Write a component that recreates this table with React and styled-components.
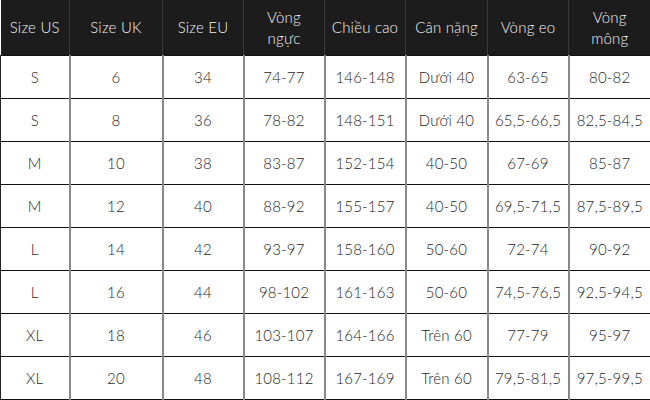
import React from 'react'
import styled, { createGlobalStyle } from 'styled-components'

const GlobalStyle = createGlobalStyle`
  html, body {
    margin: 0;
    padding: 0;
    background: #ffffff;
  }
`

const widths = [69, 93, 81, 81, 81, 82, 81, 82]

const headers = [['Size US'], ['Size UK'], ['Size EU'], ['Vòng', 'ngực'], ['Chiều cao'], ['Cân nặng'], ['Vòng eo'], ['Vòng', 'mông']]

const rows = [
  ['S', '6', '34', '74-77', '146-148', 'Dưới 40', '63-65', '80-82'],
  ['S', '8', '36', '78-82', '148-151', 'Dưới 40', '65,5-66,5', '82,5-84,5'],
  ['M', '10', '38', '83-87', '152-154', '40-50', '67-69', '85-87'],
  ['M', '12', '40', '88-92', '155-157', '40-50', '69,5-71,5', '87,5-89,5'],
  ['L', '14', '42', '93-97', '158-160', '50-60', '72-74', '90-92'],
  ['L', '16', '44', '98-102', '161-163', '50-60', '74,5-76,5', '92,5-94,5'],
  ['XL', '18', '46', '103-107', '164-166', 'Trên 60', '77-79', '95-97'],
  ['XL', '20', '48', '108-112', '167-169', 'Trên 60', '79,5-81,5', '97,5-99,5'],
]

const SizeTable = styled.table`
  width: 650px;
  height: 400px;
  table-layout: fixed;
  border-collapse: collapse;
  font-family: 'Lato', 'DejaVu Sans', sans-serif;
  font-size: 15px;
  font-weight: 300;
  letter-spacing: 0.2px;
  color: #1e1e1e;
`

const HeadCell = styled.th`
  height: 55px;
  padding: 0 2px;
  background: #1c1c1c;
  color: #f2f2f2;
  font-weight: 300;
  line-height: 21px;
  text-align: center;
  white-space: nowrap;
  border-left: 1px solid #3a3a3a;
  &:first-child {
    border-left: none;
  }
`

const Cell = styled.td`
  height: 42px;
  padding: 0;
  text-align: center;
  white-space: nowrap;
  border-top: 1px solid #111;
  border-left: 2px solid #888;
  &:first-child {
    border-left: 1px solid #222;
  }
  &:last-child {
    border-right: 1px solid #222;
  }
`

const Row = styled.tr`
  &:last-child td {
    border-bottom: 1px solid #111;
  }
`

export default function App() {
  return (
    <>
      <GlobalStyle />
      <SizeTable>
        <colgroup>
          {widths.map((w, i) => (
            <col key={i} style={{ width: w }} />
          ))}
        </colgroup>
        <thead>
          <tr>
            {headers.map(lines => (
              <HeadCell key={lines.join(' ')}>
                {lines.map((l, k) => (
                  <React.Fragment key={k}>
                    {k > 0 && <br />}
                    {l}
                  </React.Fragment>
                ))}
              </HeadCell>
            ))}
          </tr>
        </thead>
        <tbody>
          {rows.map((r, i) => (
            <Row key={i}>
              {r.map((v, j) => (
                <Cell key={j}>{v}</Cell>
              ))}
            </Row>
          ))}
        </tbody>
      </SizeTable>
    </>
  )
}
